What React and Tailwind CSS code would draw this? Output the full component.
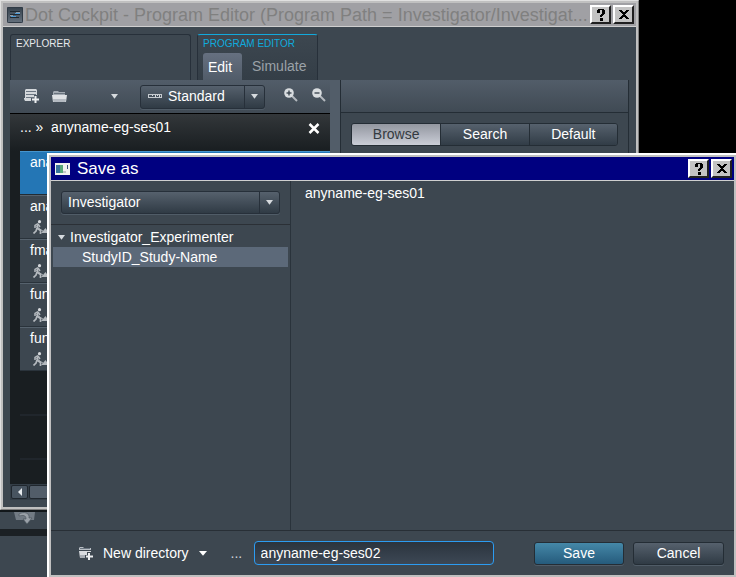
import React from "react";

function HelpGlyph() {
  return (
    <svg width="10" height="14" viewBox="0 0 10 14" fill="#000" shapeRendering="crispEdges" aria-hidden="true">
      <path d="M2 1h6v1h1v4H8v1H7v1H6v1H4V7h1V6h1V2H4v3H1V2h1zM4 10h3v3H4z" />
    </svg>
  );
}

function CloseGlyph() {
  return (
    <svg width="10" height="9" viewBox="0 0 10 9" fill="#000" shapeRendering="crispEdges" aria-hidden="true">
      <path d="M0 0h3v1h1v1h2V1h1V0h3v1H9v1H8v1H7v1H6v1h1v1h1v1h1v1h1v1H7V8H6V7H4v1H3v1H0V8h1V7h1V6h1V5h1V4H3V3H2V2H1V1H0z" />
    </svg>
  );
}

function CaptionButton({ label, children }) {
  return (
    <button
      type="button"
      aria-label={label}
      className="flex h-[19px] w-[21px] items-center justify-center border-t-2 border-r-2 border-b-2 border-l-2 border-t-white border-r-[#202020] border-b-[#202020] border-l-white bg-[#c3c3c3]"
    >
      {children}
    </button>
  );
}

function TitleBar({ icon, title, barClass, titleClass }) {
  return (
    <header className={`flex h-6 shrink-0 items-center border-b border-[#cfcfcf] pr-[2px] pl-1 ${barClass}`}>
      {icon}
      <h1 className={`min-w-0 flex-1 leading-6 font-normal whitespace-nowrap ${titleClass}`}>{title}</h1>
      <div className="flex gap-0.5">
        <CaptionButton label="Help"><HelpGlyph /></CaptionButton>
        <CaptionButton label="Close"><CloseGlyph /></CaptionButton>
      </div>
    </header>
  );
}

function AppIcon() {
  return (
    <svg width="16" height="16" viewBox="0 0 16 16" className="shrink-0" aria-hidden="true">
      <defs>
        <linearGradient id="app-face" x1="0" y1="0" x2="0" y2="1">
          <stop offset="0" stopColor="#34404b" />
          <stop offset="1" stopColor="#66727f" />
        </linearGradient>
      </defs>
      <rect width="16" height="16" rx="1" fill="url(#app-face)" />
      <rect x="0.500" y="0.500" width="15" height="15" rx="1" fill="none" stroke="#303b46" />
      <path d="M3 4.500h10M3 7.500h10M3 10.500h9" stroke="#1f2931" />
      <path d="M8 6.500h5M4 9.500h5" stroke="#4f9cd6" />
      <path d="M9 5.500h4M3 8.500h3" stroke="#8d9ba8" />
    </svg>
  );
}

function DialogIcon() {
  return (
    <svg width="15" height="12" viewBox="0 0 15 12" className="shrink-0" aria-hidden="true">
      <rect width="15" height="12" fill="#f1f2ef" />
      <rect x="1" y="2" width="7" height="8" fill="#3d8f83" />
      <path d="M1 2h4v8H1z" fill="#38739b" />
      <path d="M5 2h3v8H5z" fill="#57a778" />
      <path d="M12 2h1v4h-1z" fill="#3a557b" />
      <path d="M8 8h3v2H8z" fill="#c4c6c8" />
    </svg>
  );
}

function Triangle({ className = "text-[#d6dade]", size = 7 }) {
  return (
    <svg width={size} height="5" viewBox="0 0 7 5" preserveAspectRatio="none" className={`shrink-0 ${className}`} fill="currentColor" aria-hidden="true">
      <path d="M0 0h7L3.500 4.800z" />
    </svg>
  );
}

function ListAddIcon() {
  return (
    <svg width="16" height="15" viewBox="0 0 16 15" aria-hidden="true">
      <path d="M1 1l1-1h10l1 1v9l-1 2H1l-1-2V9h1z" fill="#d3d7db" />
      <path d="M2 2.500h10M2 5.500h10M2 8.500h10" stroke="#6b7682" />
      <path d="M7 9h3V6h4v3h2v4H7z" fill="#4b5662" />
      <path d="M11.500 7v7M8 10.500h7" stroke="#eceef0" strokeWidth="2" />
    </svg>
  );
}

function FolderIcon() {
  return (
    <svg width="15" height="11" viewBox="0 0 15 11" aria-hidden="true">
      <path d="M1 1l1-1h4l1 1h6v3H1z" fill="#a4abb3" />
      <path d="M2 2.500h11" stroke="#69737e" />
      <path d="M0 4h15l-1 7H1z" fill="#dfe2e5" />
      <path d="M1 8h13l-0.500 3H1.400z" fill="#b4bac1" />
    </svg>
  );
}

function FolderAddIcon() {
  return (
    <svg width="14" height="13" viewBox="0 0 14 13" aria-hidden="true">
      <path d="M0 1l1-1h3l1 1h7v2H0z" fill="#b9bfc5" />
      <path d="M1 1.500h10" stroke="#6b7580" />
      <path d="M0 4h12l-1 7H1z" fill="#d9dce0" />
      <path d="M1 8h10v3H1z" fill="#a8aeb5" />
      <path d="M6 8h2V5h4v3h2v4H6z" fill="#3d4750" />
      <path d="M10 6v7M7 9.500h7" stroke="#eceef0" strokeWidth="2" />
    </svg>
  );
}

function RulerIcon() {
  return (
    <svg width="14" height="5" viewBox="0 0 14 5" shapeRendering="crispEdges" className="shrink-0" aria-hidden="true">
      <path d="M0 0h14v4H0z" fill="#c5cacf" />
      <path d="M1 1h12v2H1z" fill="#46515c" />
      <path d="M4 1h1v1H4zM7 1h1v2H7zM9 1h1v1H9zM11 1h1v2h-1z" fill="#d5d9dd" />
    </svg>
  );
}

function ZoomIcon({ plus }) {
  return (
    <svg width="14" height="14" viewBox="0 0 14 14" aria-hidden="true">
      <path d="M8 8l5 5" stroke="#b4b9bf" strokeWidth="2" />
      <circle cx="5" cy="5" r="4.800" fill="#d9dde0" />
      <path d="M2.500 5h5" stroke="#323d47" strokeWidth="1.300" />
      {plus && <path d="M5 2.500v5" stroke="#323d47" strokeWidth="1.300" />}
    </svg>
  );
}

function WorkerIcon() {
  return (
    <svg width="17" height="14" viewBox="0 0 17 14" fill="none" stroke="#b4b9be" aria-hidden="true">
      <circle cx="6.500" cy="1.700" r="1.600" fill="#d6d9dc" stroke="none" />
      <path d="M5 3.500L2 5.500V8M5 4l2 3" strokeWidth="1.500" />
      <path d="M4.500 4.500v4l3 2v3.500M4 8L3 11 0.500 13.500" strokeWidth="1.700" />
      <path d="M2.500 6l8 5.500" />
      <path d="M8 13l2-2 2.500-3 3.500 5z" fill="#b4b9be" stroke="none" />
    </svg>
  );
}

function Picker({ id, label, value, icon, className }) {
  return (
    <div className={`relative flex items-center rounded-[3px] border border-[#27303a] bg-linear-to-b from-[#56616d] to-[#303b45] shadow-[0_1px_0_#505c67] ${className}`}>
      {icon}
      <select id={id} aria-label={label} className="h-full min-w-0 flex-1 appearance-none bg-transparent pb-0.5 pl-[6px] text-sm text-white outline-none">
        <option>{value}</option>
      </select>
      <span className="pointer-events-none flex h-full w-5 items-center justify-center border-l border-[#27303a]">
        <Triangle />
      </span>
    </div>
  );
}

const items = ["anat", "anat", "fmap", "func", "func"];

function ProgramList() {
  return (
    <ul className="flex-1 pl-[10px]">
      {items.map((name, i) => (
        <li
          key={i}
          className={
            i === 0
              ? "h-11 border-t border-[#4795cd] border-b border-b-[#222b33] bg-[#2476b5] pl-[10px]"
              : "h-11 border-t border-[#56626d] border-b border-b-[#2a333b] bg-[#3d4750] pl-[10px]"
          }
        >
          <span className="block h-6 text-sm leading-[21px]">{name}</span>
          {i > 0 && <span className="block pl-[3px]"><WorkerIcon /></span>}
        </li>
      ))}
      <li className="h-[45px] border-b-2 border-[#20262c]" />
      <li className="h-11 border-b-2 border-[#20262c]" />
    </ul>
  );
}

function EditorWindow() {
  return (
    <main className="absolute inset-x-0 top-0 mr-[97px] flex h-[510px] border border-t-[#e0e0e0] border-r-[#808080] border-b-[#808080] border-l-[#e0e0e0]">
      <div className="flex min-w-0 flex-1 flex-col border-2 border-[#c0c0c0] bg-[#3d4750]">
        <TitleBar
          icon={<AppIcon />}
          title="Dot Cockpit - Program Editor (Program Path = Investigator/Investigat..."
          barClass="bg-[#a0a0a4] text-[#808080]"
          titleClass="pl-[2px] text-lg"
        />
        <div className="flex min-h-0 flex-1 flex-col p-[7px]">
          <nav className="flex h-[46px] shrink-0 gap-[6px]">
            <section className="w-[181px] rounded-t-[3px] border border-b-0 border-[#27303a] pl-[5px]">
              <h2 className="text-[10px] leading-[18px] text-[#e8eaec]">EXPLORER</h2>
            </section>
            <section className="w-[121px] rounded-t-[3px] border border-t-[#12a9dc] border-r-[#27303a] border-b-0 border-l-[#27303a] bg-linear-to-b from-[#3d4750] to-[#343e47] pl-[5px]">
              <h2 className="text-[10px] leading-[18px] whitespace-nowrap text-[#0fabde]">PROGRAM EDITOR</h2>
              <div className="flex" role="tablist">
                <button type="button" role="tab" aria-selected="true" className="h-[27px] w-[39px] rounded-t-[3px] bg-linear-to-b from-[#667080] to-[#515c69] pr-[5px] text-sm text-white">Edit</button>
                <button type="button" role="tab" aria-selected="false" className="h-[27px] pb-0.5 pl-[10px] text-sm text-[#9ba2a8]">Simulate</button>
              </div>
            </section>
          </nav>
          <div className="flex min-h-0 flex-1">
            <section className="flex w-[320px] shrink-0 flex-col bg-[#191e21]">
              <div className="flex h-[34px] shrink-0 items-center border-b border-black bg-linear-to-b from-[#525d69] to-[#404a54] pl-[14px]">
                <button type="button" aria-label="New program"><ListAddIcon /></button>
                <button type="button" aria-label="Open folder" className="ml-3"><FolderIcon /></button>
                <button type="button" aria-label="More" className="ml-11"><Triangle /></button>
                <Picker id="view" label="View" value="Standard" icon={<span className="pl-[7px]"><RulerIcon /></span>} className="ml-[22px] h-6 w-[125px]" />
                <button type="button" aria-label="Zoom in" className="ml-[19px] pb-1"><ZoomIcon plus /></button>
                <button type="button" aria-label="Zoom out" className="ml-[14px] pb-1"><ZoomIcon /></button>
              </div>
              <div className="flex h-[37px] shrink-0 items-start justify-between bg-linear-to-b from-[#33373a] to-[#191e21] pr-[10px] pl-[10px] text-sm leading-[27px] text-white">
                <span>...&nbsp;»&nbsp; anyname-eg-ses01</span>
                <button type="button" aria-label="Close program" className="mt-[9px]">
                  <svg width="12" height="11" viewBox="0 0 12 11" fill="none" stroke="#fff" strokeWidth="2.500" aria-hidden="true"><path d="M1.500 1l9 9M10.500 1l-9 9" /></svg>
                </button>
              </div>
              <div className="flex min-h-0 flex-1 flex-col overflow-hidden text-white">
                <ProgramList />
              </div>
              <div className="flex h-4 shrink-0 gap-px bg-[#343e47] p-px">
                <button type="button" aria-label="Scroll left" className="flex w-[17px] items-center justify-center rounded-[2px] border border-[#20272e] bg-[#485460]">
                  <svg width="4" height="8" viewBox="0 0 4 8" fill="#e7eaed" aria-hidden="true"><path d="M4 0v8L0 4z" /></svg>
                </button>
                <span className="flex-1 rounded-[2px] border border-[#20272e] bg-[#525d69]" />
              </div>
            </section>
            <div className="w-[10px] shrink-0 bg-[#525d69]" />
            <section className="min-w-0 flex-1 border-r border-l border-[#242d35]">
              <div className="h-[33px] border-b border-[#242d35] bg-linear-to-b from-[#525d69] to-[#404a54]" />
              <div className="mt-[10px] mr-[10px] ml-[10px] grid h-[23px] grid-cols-3 overflow-hidden rounded-[3px] border border-[#242d35] text-sm text-white">
                <button type="button" className="bg-linear-to-b from-[#9397a0] to-[#cdd0da] pb-0.5 text-[#333a41]">Browse</button>
                <button type="button" className="border-l border-[#242d35] bg-linear-to-b from-[#56616d] to-[#303b45] pb-0.5">Search</button>
                <button type="button" className="border-l border-[#242d35] bg-linear-to-b from-[#56616d] to-[#303b45] pb-0.5">Default</button>
              </div>
            </section>
          </div>
        </div>
      </div>
    </main>
  );
}

function SaveDialog() {
  return (
    <section role="dialog" aria-label="Save as" className="absolute top-[153px] right-0 bottom-0 left-[47px] flex border-t-2 border-l-2 border-white">
      <div className="flex min-w-0 flex-1 flex-col border-2 border-[#c0c0c0] bg-[#3d4750]">
        <TitleBar icon={<DialogIcon />} title="Save as" barClass="bg-[#000080] text-white" titleClass="pl-[7px] text-[17px]" />
        <div className="flex min-h-0 flex-1">
          <aside className="w-[240px] shrink-0 border-r border-[#2a333b] text-sm text-white">
            <div className="border-b border-[#2b3036] px-[10px] py-[10px]">
              <Picker id="root-folder" label="Folder" value="Investigator" className="h-[23px] w-[219px]" />
            </div>
            <ul className="px-[2px] pt-[2px]">
              <li>
                <button type="button" aria-expanded="true" className="flex h-5 w-full items-center gap-[5px] pl-[5px]">
                  <Triangle />
                  Investigator_Experimenter
                </button>
                <ul>
                  <li><button type="button" className="h-5 w-full bg-[#5c6979] pl-[29px] text-left leading-5">StudyID_Study-Name</button></li>
                </ul>
              </li>
            </ul>
          </aside>
          <div className="min-w-0 flex-1 pt-[2px] pl-[14px] text-sm leading-5 text-white">anyname-eg-ses01</div>
        </div>
        <footer className="flex h-[45px] shrink-0 items-center border-t border-[#282f36] pr-[10px] pl-7 text-sm text-white">
          <button type="button" className="flex items-center gap-[10px] whitespace-nowrap">
            <FolderAddIcon />
            New directory
            <Triangle size={8} className="text-white" />
          </button>
          <label htmlFor="dirname" className="w-[47px] pl-6 text-[#d0d4d8]">...</label>
          <input id="dirname" defaultValue="anyname-eg-ses02" className="h-6 w-[240px] rounded-[4px] border border-[#2c9cf2] bg-linear-to-b from-[#2b343e] to-[#3d4855] pl-[6px] text-sm text-white outline-none" />
          <div className="ml-auto flex gap-[9px]">
            <button type="button" className="h-[23px] w-[90px] rounded-[3px] border border-[#242d35] bg-linear-to-b from-[#4588a8] to-[#255b7c] shadow-[0_1px_0_#505c67]">Save</button>
            <button type="button" className="h-[23px] w-[91px] rounded-[3px] border border-[#242d35] bg-linear-to-b from-[#56616d] to-[#303b45] shadow-[0_1px_0_#505c67]">Cancel</button>
          </div>
        </footer>
      </div>
    </section>
  );
}

function BackgroundPanel() {
  return (
    <div className="mr-[97px] flex h-full flex-col bg-[#3d4750] pt-[510px]">
      <div className="h-[19px] shrink-0 border-t-2 border-[#12171a] pl-[14px]">
        <svg width="22" height="12" viewBox="0 0 22 12" aria-hidden="true">
          <path d="M0 0h21l-1 8H2z" fill="#727b84" />
          <path d="M5 2c5-3 11-1 10 4h3l-5 6-4-5h3c0-4-3-4-7-3z" fill="#9aa1a8" stroke="#4d5760" strokeWidth="0.700" />
        </svg>
      </div>
      <div className="h-[7px] shrink-0 bg-[#1b2024]" />
    </div>
  );
}

export default function App() {
  return (
    <div className="relative h-screen min-h-[577px] overflow-hidden bg-black font-['Liberation_Sans',Arial,sans-serif]">
      <BackgroundPanel />
      <EditorWindow />
      <SaveDialog />
    </div>
  );
}
